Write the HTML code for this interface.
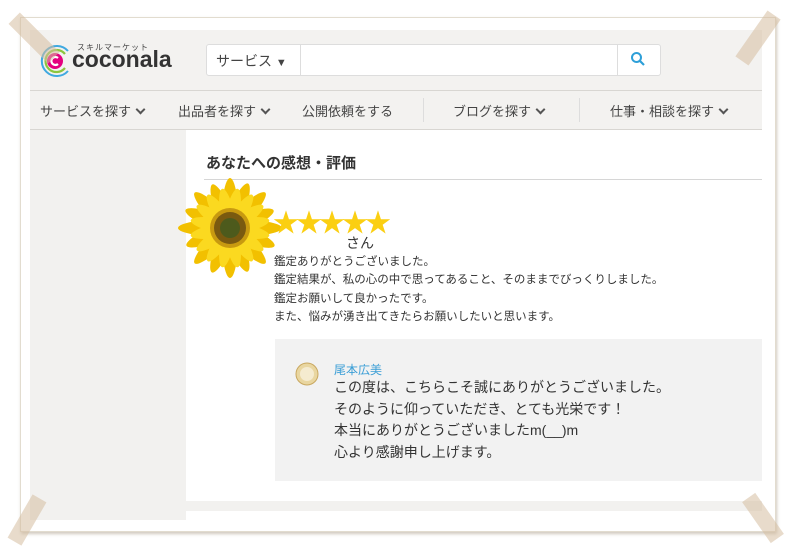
<!DOCTYPE html>
<html><head><meta charset="utf-8"><style>
*{margin:0;padding:0;box-sizing:border-box}
body{width:791px;height:550px;background:#fff;position:relative;overflow:hidden;font-family:"Liberation Sans","Noto Sans CJK JP",sans-serif;color:#333}
.a{position:absolute}
.card{left:20px;top:17px;width:756px;height:515px;border:1px solid #e2dccf;box-shadow:1px 2px 3px rgba(120,100,70,.35);background:#fff}
.nav{font-size:13px;color:#444;top:101px;white-space:nowrap}
.chev{display:inline-block;width:7px;height:7px;border-right:2px solid #555;border-bottom:2px solid #555;transform:rotate(45deg);margin-left:6px;position:relative;top:-3px}
.tape{background:rgba(214,190,160,.55)}
</style></head><body>
<div class="a card"></div>
<div class="a" style="left:30px;top:30px;width:732px;height:60px;background:#f3f2f0"></div>
<div class="a" style="left:30px;top:90px;width:732px;height:1px;background:#d8d6d2"></div>
<div class="a" style="left:30px;top:91px;width:732px;height:38px;background:#f3f2f0"></div>
<div class="a" style="left:30px;top:129px;width:732px;height:1px;background:#d8d6d2"></div>
<div class="a" style="left:30px;top:130px;width:156px;height:390px;background:#f2f1ef"></div>
<div class="a" style="left:186px;top:501px;width:576px;height:10px;background:#f2f1ef"></div>

<svg class="a" style="left:38px;top:43px" width="36" height="36" viewBox="0 0 36 36">
<path d="M30 8 A15 15 0 1 0 30 28" fill="none" stroke="#3fa9e0" stroke-width="2"/>
<path d="M27 11 A11 11 0 1 0 27 25" fill="none" stroke="#8cc63f" stroke-width="2.2"/>
<circle cx="17" cy="18" r="8" fill="#e4007f"/>
<path d="M20 15 A4 4 0 1 0 20 21" fill="none" stroke="#fff" stroke-width="2.2"/>
</svg>
<div class="a" style="left:77px;top:42px;font-size:8px;color:#444;letter-spacing:1px">スキルマーケット</div>
<div class="a" style="left:72px;top:46px;font-size:23px;font-weight:bold;color:#333;letter-spacing:0px">coconala</div>

<div class="a" style="left:206px;top:44px;width:455px;height:32px;background:#fff;border:1px solid #ddd;border-radius:3px"></div>
<div class="a" style="left:300px;top:45px;width:1px;height:30px;background:#ddd"></div>
<div class="a" style="left:617px;top:45px;width:1px;height:30px;background:#ddd"></div>
<div class="a" style="left:216px;top:51px;font-size:14px;color:#444">サービス <span style="font-size:11px">▼</span></div>
<svg class="a" style="left:630px;top:51px" width="16" height="16" viewBox="0 0 16 16"><circle cx="6.5" cy="6.5" r="4.5" fill="none" stroke="#2e9fd8" stroke-width="2"/><path d="M10 10l4 4" stroke="#2e9fd8" stroke-width="2.2"/></svg>

<div class="a nav" style="left:40px">サービスを探す<span class="chev"></span></div>
<div class="a nav" style="left:178px">出品者を探す<span class="chev"></span></div>
<div class="a nav" style="left:302px">公開依頼をする</div>
<div class="a" style="left:423px;top:98px;width:1px;height:24px;background:#ddd"></div>
<div class="a nav" style="left:453px">ブログを探す<span class="chev"></span></div>
<div class="a" style="left:579px;top:98px;width:1px;height:24px;background:#ddd"></div>
<div class="a nav" style="left:610px">仕事・相談を探す<span class="chev"></span></div>

<div class="a" style="left:206px;top:152px;font-size:15px;font-weight:bold;color:#333">あなたへの感想・評価</div>
<div class="a" style="left:204px;top:179px;width:558px;height:1px;background:#d6d6d6"></div>

<svg class="a" style="left:172px;top:178px" width="116" height="104" viewBox="0 0 116 104">
<g transform="translate(58,50)">
<g fill="#f2c000">
<ellipse rx="9" ry="50" transform="rotate(0)"/><ellipse rx="9" ry="48" transform="rotate(22)"/><ellipse rx="9" ry="50" transform="rotate(45)"/><ellipse rx="9" ry="47" transform="rotate(68)"/><ellipse rx="9" ry="52" transform="rotate(90)"/><ellipse rx="9" ry="48" transform="rotate(112)"/><ellipse rx="9" ry="50" transform="rotate(135)"/><ellipse rx="9" ry="47" transform="rotate(158)"/>
</g>
<g fill="#fbd920">
<ellipse rx="8" ry="40" transform="rotate(11)"/><ellipse rx="8" ry="40" transform="rotate(34)"/><ellipse rx="8" ry="40" transform="rotate(56)"/><ellipse rx="8" ry="40" transform="rotate(79)"/><ellipse rx="8" ry="40" transform="rotate(101)"/><ellipse rx="8" ry="40" transform="rotate(124)"/><ellipse rx="8" ry="40" transform="rotate(146)"/><ellipse rx="8" ry="40" transform="rotate(169)"/>
</g>
<circle r="20" fill="#c89a10"/><circle r="16" fill="#7a5a10"/><circle r="10" fill="#4d5a1c"/>
</g></svg>

<div class="a" style="left:273px;top:203px;font-size:26px;color:#fbcf12;letter-spacing:-3px">★★★★★</div>
<div class="a" style="left:346px;top:233px;font-size:14px;color:#333">さん</div>
<div class="a" style="left:274px;top:253px;font-size:11.5px;line-height:18.3px;color:#333">鑑定ありがとうございました。<br>鑑定結果が、私の心の中で思ってあること、そのままでびっくりしました。<br>鑑定お願いして良かったです。<br>また、悩みが湧き出てきたらお願いしたいと思います。</div>

<div class="a" style="left:275px;top:339px;width:487px;height:142px;background:#f2f2f2"></div>
<svg class="a" style="left:295px;top:362px" width="24" height="24"><circle cx="12" cy="12" r="11" fill="#e9d6a0"/><circle cx="12" cy="12" r="7" fill="#f5ebcf"/><circle cx="12" cy="12" r="11" fill="none" stroke="#c9a860" stroke-width="1"/></svg>
<div class="a" style="left:334px;top:361px;font-size:12px;color:#3b9ed6">尾本広美</div>
<div class="a" style="left:334px;top:377px;font-size:14px;line-height:21.7px;color:#333">この度は、こちらこそ誠にありがとうございました。<br>そのように仰っていただき、とても光栄です！<br>本当にありがとうございましたm(__)m<br>心より感謝申し上げます。</div>

<div class="a tape" style="left:6px;top:30px;width:56px;height:16px;transform:rotate(45deg)"></div>
<div class="a tape" style="left:730px;top:30px;width:56px;height:16px;transform:rotate(-55deg)"></div>
<div class="a tape" style="left:2px;top:512px;width:50px;height:16px;transform:rotate(-60deg)"></div>
<div class="a tape" style="left:738px;top:510px;width:50px;height:16px;transform:rotate(55deg)"></div>
</body></html>
